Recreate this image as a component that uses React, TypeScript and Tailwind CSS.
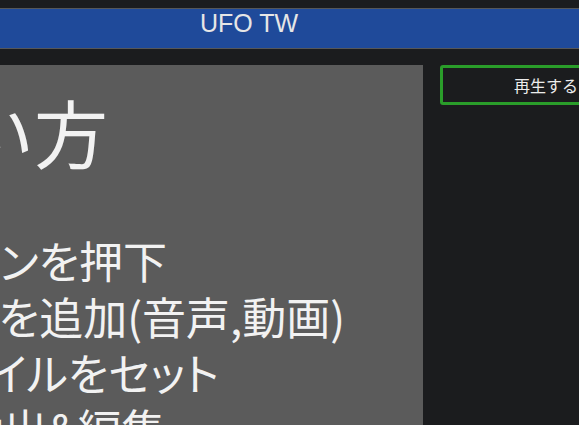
const steps = [
  { text: "1. 追加ボタンを押下", shift: "ml-[-62px]" },
  { text: "2. トラックを追加(音声,動画)", shift: "ml-[-40px]" },
  { text: "3. ファイルをセット", shift: "ml-[23px]" },
  { text: "4. 抽出&編集", shift: "ml-[67px]" },
];

const App: React.FC = () => {
  return (
    <div className="w-[579px] h-[425px] overflow-hidden bg-[#1b1c1e] font-['Liberation_Sans','Noto_Sans_CJK_JP',sans-serif]">
      <div className="w-[806px] ml-[-154px]">
        <div className="h-2" />
        <div className="h-[41px] border-y border-[#555759] bg-[#1f4a9a] flex items-center justify-center">
          <div className="text-[25px] text-[#e6e6e6] leading-none mb-[11px]">UFO TW</div>
        </div>
        <div className="flex gap-[17px] mt-4">
          <div className="w-[577px] h-[400px] flex-none bg-[#5b5b5b] overflow-hidden text-[#f2f2f2] font-['Noto_Sans_CJK_JP',sans-serif]">
            <div className="pl-[40px] pt-[26px] text-[74px] leading-[80px] whitespace-nowrap">使い方</div>
            <div className="mt-[61px] [font-feature-settings:'palt']">
              {steps.map((s) => (
                <div key={s.text} className={`text-[44px] leading-[56px] whitespace-nowrap ${s.shift}`}>
                  {s.text}
                </div>
              ))}
            </div>
          </div>
          <div className="w-[212px] flex-none">
            <button className="w-full h-10 border-[3px] border-[#2a9d2a] rounded-[3px] text-[16px] text-[#ececec] font-['Noto_Sans_CJK_JP',sans-serif]">
              再生する
            </button>
          </div>
        </div>
      </div>
    </div>
  );
};

export default App;
